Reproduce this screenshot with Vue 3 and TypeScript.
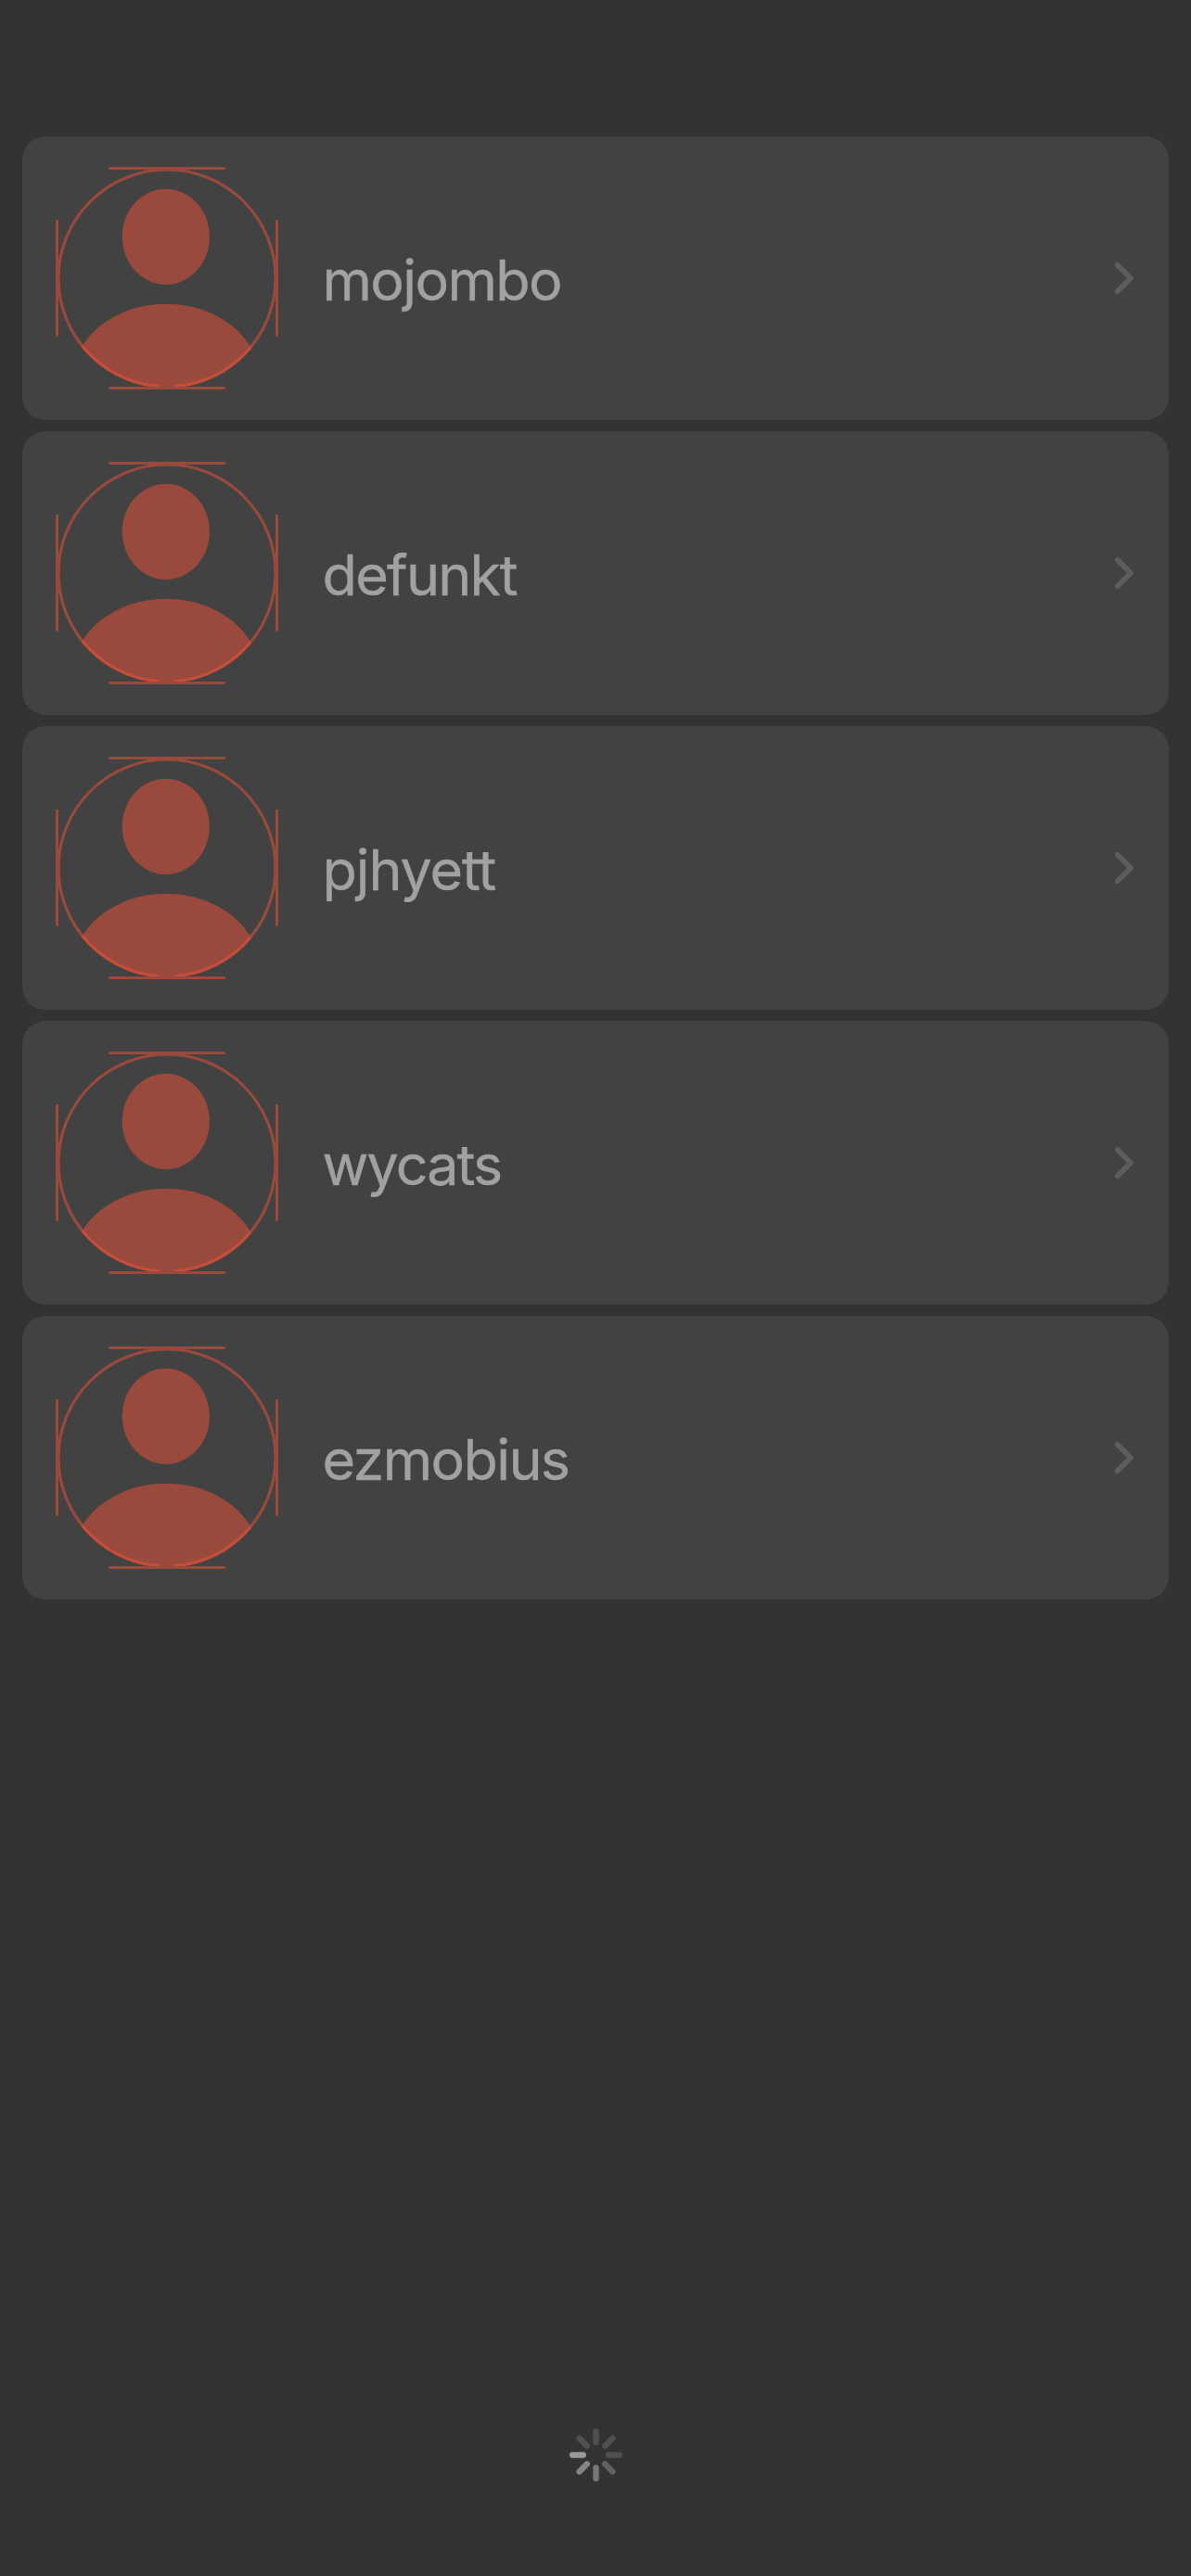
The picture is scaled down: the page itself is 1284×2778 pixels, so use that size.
<script setup lang="ts">
interface User {
  login: string
  tracking: number
}

const users: User[] = [
  { login: 'mojombo', tracking: -1.6 },
  { login: 'defunkt', tracking: -1.7 },
  { login: 'pjhyett', tracking: -1.1 },
  { login: 'wycats', tracking: -1.9 },
  { login: 'ezmobius', tracking: -1.6 },
]
const spokes: string[] = ['#505052', '#505052', '#505052', '#616163', '#77777a', '#858589', '#98989e', '#505052']
</script>

<template>
  <main class="screen">
    <ul class="list">
      <li v-for="user in users" :key="user.login" class="card">
        <svg class="avatar" viewBox="0 0 240 240" aria-hidden="true">
          <defs>
            <clipPath :id="'disc-' + user.login"><circle cx="120" cy="120" r="118" /></clipPath>
            <clipPath :id="'body-' + user.login"><ellipse cx="119.1" cy="231" rx="101.5" ry="83.3" /></clipPath>
          </defs>
          <ellipse cx="118.8" cy="75.3" rx="47.1" ry="51.6" fill="#9a4a3d" />
          <ellipse cx="119.1" cy="231" rx="101.5" ry="83.3" fill="#9a4a3d" :clip-path="`url(#disc-${user.login})`" />
          <circle cx="120" cy="120" r="117" fill="none" stroke="#9a4a3d" stroke-width="3.1" />
          <circle cx="120" cy="120" r="117" fill="none" stroke="#c54e3a" stroke-width="3.2" :clip-path="`url(#body-${user.login})`" />
          <path d="M112 236H128" stroke="#9a4a3d" stroke-width="2" />
          <path d="M57.3 1.5H183M57.3 238.5H183M1.5 57V182.7M238.5 57V182.7" fill="none" stroke="#9a4a3d" stroke-width="3" />
        </svg>
        <span class="name" :style="{ letterSpacing: user.tracking + 'px' }">{{ user.login }}</span>
        <svg class="chevron" viewBox="0 0 20 34" aria-hidden="true">
          <path d="M2.7 2.8L17 17L2.7 31.2" />
        </svg>
      </li>
    </ul>
    <svg class="spinner" viewBox="-30.5 -30.5 60 60" aria-label="Loading">
      <line v-for="(color, i) in spokes" :key="i" x1="0" y1="-13.8" x2="0" y2="-25.3" :stroke="color" :transform="`rotate(${i * 45})`" />
    </svg>
  </main>
</template>

<style>
body {
  margin: 0;
  background: #333333;
}
</style>

<style scoped>
.screen {
  box-sizing: border-box;
  height: 2778px;
  padding: 147px 24px 101px;
  display: flex;
  flex-direction: column;
  justify-content: space-between;
  align-items: center;
  background: #333333;
  font-family: Inter, "Liberation Sans", sans-serif;
}
.list {
  width: 100%;
  margin: 0;
  padding: 0;
  list-style: none;
  display: flex;
  flex-direction: column;
  gap: 12px;
}
.card {
  box-sizing: border-box;
  height: 306px;
  padding: 0 38px 0 36px;
  display: flex;
  align-items: center;
  border-radius: 25px;
  background: #424242;
}
.avatar {
  width: 240px;
  height: 240px;
  flex: none;
}
.name {
  flex: 1;
  margin-left: 47.5px;
  padding-top: 4px;
  color: #a1a1a1;
  font-size: 61px;
  line-height: 72px;
  -webkit-text-stroke: 0.4px #a1a1a1;
}
.chevron {
  width: 20px;
  height: 34px;
  flex: none;
  overflow: visible;
}
.chevron path {
  fill: none;
  stroke: #5d5d5d;
  stroke-width: 5.6;
  stroke-linecap: round;
  stroke-linejoin: round;
}
.spinner {
  width: 60px;
  height: 60px;
}
.spinner line {
  stroke-width: 6.4;
  stroke-linecap: round;
}
</style>
